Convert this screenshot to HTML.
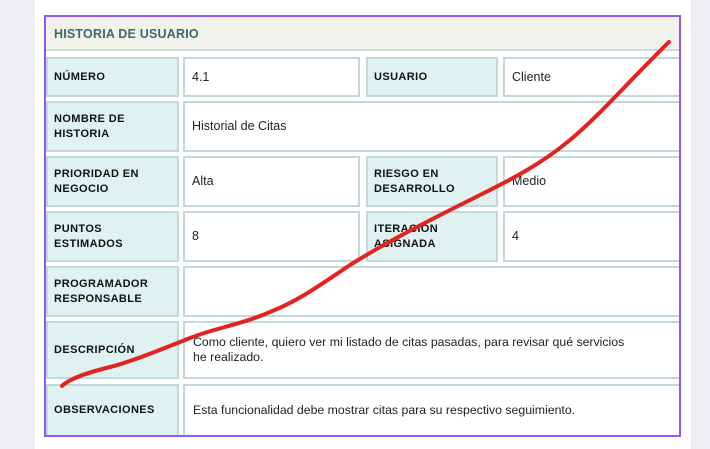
<!DOCTYPE html>
<html><head><meta charset="utf-8"><style>
*{margin:0;padding:0;box-sizing:border-box}
body{width:710px;height:449px;background:#eeeff3;position:relative;overflow:hidden;font-family:"Liberation Sans",sans-serif}
.card{position:absolute;left:35px;top:0;width:656px;height:449px;background:#fff}
.frame{position:absolute;left:44px;top:15px;width:637px;height:422px;border:2px solid #8f57f5;z-index:5}
.hdr{position:absolute;left:46px;top:17px;width:633px;height:34px;background:#f2f2ed;border-bottom:2px solid #c9dcdc;color:#3f6a6a;font-weight:bold;font-size:12.5px;padding:10px 0 0 8px;letter-spacing:0.2px}
.c{position:absolute;border:2px solid #c3d9d8;font-size:12.5px;color:#222;display:flex;align-items:center;padding-left:7px;line-height:15px}
.l{background:#dff2f1;font-weight:bold;font-size:11px;color:#111;padding-left:6px;letter-spacing:0.4px}
</style></head><body>
<div class="card"></div>
<div class="frame"></div>
<div class="hdr">HISTORIA DE USUARIO</div>

<div class="c l" style="left:46px;top:57px;width:133px;height:40px">NÚMERO</div>
<div class="c" style="left:183px;top:57px;width:177px;height:40px">4.1</div>
<div class="c l" style="left:366px;top:57px;width:132px;height:40px">USUARIO</div>
<div class="c" style="left:503px;top:57px;width:178px;height:40px">Cliente</div>

<div class="c l" style="left:46px;top:101px;width:133px;height:51px">NOMBRE DE<br>HISTORIA</div>
<div class="c" style="left:183px;top:101px;width:498px;height:51px">Historial de Citas</div>

<div class="c l" style="left:46px;top:156px;width:133px;height:51px">PRIORIDAD EN<br>NEGOCIO</div>
<div class="c" style="left:183px;top:156px;width:177px;height:51px">Alta</div>
<div class="c l" style="left:366px;top:156px;width:132px;height:51px">RIESGO EN<br>DESARROLLO</div>
<div class="c" style="left:503px;top:156px;width:178px;height:51px">Medio</div>

<div class="c l" style="left:46px;top:211px;width:133px;height:51px">PUNTOS<br>ESTIMADOS</div>
<div class="c" style="left:183px;top:211px;width:177px;height:51px">8</div>
<div class="c l" style="left:366px;top:211px;width:132px;height:51px">ITERACION<br>ASIGNADA</div>
<div class="c" style="left:503px;top:211px;width:178px;height:51px">4</div>

<div class="c l" style="left:46px;top:266px;width:133px;height:51px">PROGRAMADOR<br>RESPONSABLE</div>
<div class="c" style="left:183px;top:266px;width:498px;height:51px"></div>

<div class="c l" style="left:46px;top:321px;width:133px;height:58px">DESCRIPCIÓN</div>
<div class="c" style="left:183px;top:321px;width:498px;height:58px;padding-left:8px;font-size:12.3px">Como cliente, quiero ver mi listado de citas pasadas, para revisar qué servicios<br>he realizado.</div>

<div class="c l" style="left:46px;top:384px;width:133px;height:53px">OBSERVACIONES</div>
<div class="c" style="left:183px;top:384px;width:498px;height:53px;padding-left:8px;font-size:12.3px">Esta funcionalidad debe mostrar citas para su respectivo seguimiento.</div>

<svg style="position:absolute;left:0;top:0;z-index:6" width="710" height="449">
<path d="M669,42 C630,80 600,115 570,140 C540,165 510,180 480,195 C430,220 390,240 350,265 C320,285 300,300 270,312 C240,325 215,328 190,338 C160,350 130,362 110,367 C90,372 70,378 62,386" fill="none" stroke="#e2231f" stroke-width="4" stroke-linecap="round"/>
</svg>
</body></html>
